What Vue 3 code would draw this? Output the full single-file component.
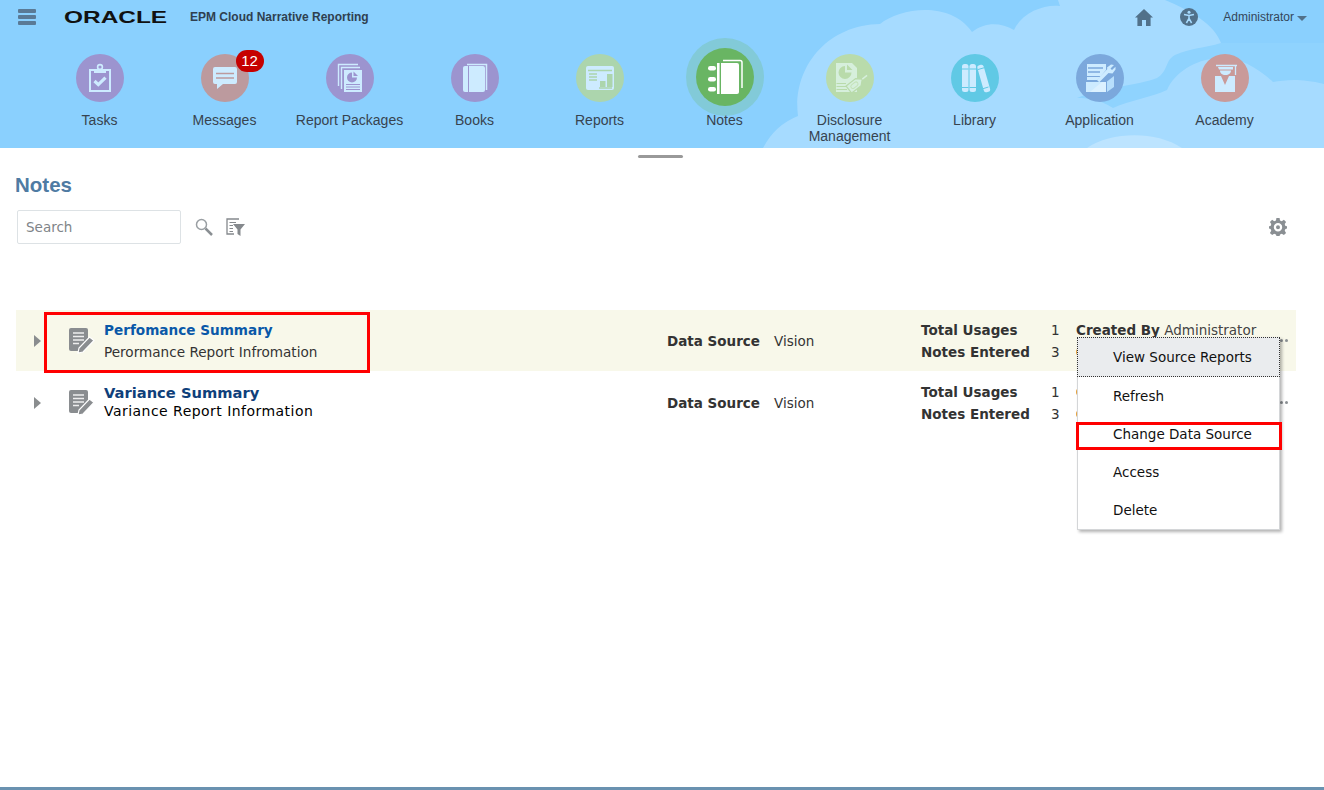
<script setup>
const navItems = [
  { id: 'tasks', label: 'Tasks', color: '#9c94cf' },
  { id: 'messages', label: 'Messages', color: '#bc9a9e', badge: 12 },
  { id: 'packages', label: 'Report Packages', color: '#9c94cf' },
  { id: 'books', label: 'Books', color: '#9c94cf' },
  { id: 'reports', label: 'Reports', color: '#acd5ad' },
  { id: 'notes', label: 'Notes', color: '#69b563', active: true },
  { id: 'disclosure', label: 'Disclosure Management', color: '#b9dbab' },
  { id: 'library', label: 'Library', color: '#60c9e5' },
  { id: 'application', label: 'Application', color: '#7ba8dc' },
  { id: 'academy', label: 'Academy', color: '#c99a99' }
]

const rows = [
  { title: 'Perfomance Summary', sub: 'Perormance Report Infromation', first: true },
  { title: 'Variance Summary', sub: 'Variance Report Information', first: false }
]

const menuItems = ['View Source Reports', 'Refresh', 'Change Data Source', 'Access', 'Delete']
</script>

<template>
  <div class="page">
    <header class="banner">
      <svg class="clouds" width="1324" height="148" viewBox="0 0 1324 148">
        <path fill="#a6dbff" d="M763 148Q775 125 798 116C792 70 825 25 880 24C900 8 950 0 972 32C985 22 1000 22 1014 30C1022 12 1045 4 1060 6L1058 0L1165 0C1190 10 1215 25 1221 43L1324 43L1324 148Z" />
        <path fill="#8fd3fe" d="M1077 98C1100 88 1140 85 1157 78C1168 72 1165 60 1175 55C1190 48 1205 48 1221 43L1324 43L1324 84C1300 78 1285 80 1273 82C1255 65 1235 56 1217 58C1195 60 1175 72 1167 90C1150 98 1130 100 1113 108C1100 100 1090 98 1077 98Z" />
        <path fill="#bde4ff" d="M1087 148C1110 132 1155 130 1182 148Z" />
      </svg>

      <div class="topbar">
        <div class="burger"><i></i><i></i><i></i></div>
        <span class="oracle">ORACLE</span>
        <span class="product">EPM Cloud Narrative Reporting</span>
        <svg class="home" width="18" height="17" viewBox="0 0 18 17">
          <path fill="#51718a" d="M9 0L18 8.5L15.6 8.5L15.6 17L11 17L11 11L7 11L7 17L2.4 17L2.4 8.5L0 8.5Z" />
        </svg>
        <svg class="access" width="18" height="18" viewBox="0 0 18 18">
          <circle cx="9" cy="9" r="9" fill="#51718a" />
          <circle cx="9" cy="4.2" r="1.5" fill="#a6dbff" />
          <path d="M4 6.6L9 7.6L14 6.6M9 7.6L9 10.5M9 10.5L6.4 15M9 10.5L11.6 15" fill="none" stroke="#a6dbff" stroke-width="1.5" />
        </svg>
        <span class="user">Administrator</span>
        <i class="caret"></i>
      </div>

      <nav class="nav">
        <div v-for="item in navItems" :key="item.id" class="nav-item">
          <div class="bubble" :class="{ active: item.active }" :style="{ background: item.color }">
            <svg v-if="item.id === 'tasks'" width="48" height="48" viewBox="0 0 48 48">
              <rect x="14" y="16" width="20" height="21" fill="none" stroke="#cdebff" stroke-width="2" />
              <rect x="18" y="15" width="12" height="4" fill="#cdebff" />
              <circle cx="24" cy="13" r="2.4" fill="none" stroke="#cdebff" stroke-width="1.6" />
              <path d="M18.5 27L22.3 30.6L29.5 23.6" fill="none" stroke="#cdebff" stroke-width="3.2" />
            </svg>
            <svg v-else-if="item.id === 'messages'" width="48" height="48" viewBox="0 0 48 48">
              <path fill="#cdebff" d="M14 13L34 13Q36 13 36 15L36 28Q36 30 34 30L22 30L16 35L16 30L14 30Q12 30 12 28L12 15Q12 13 14 13Z" />
              <path d="M15 19.5L33 19.5M15 24L33 24" stroke="#bc9a9e" stroke-width="1.7" />
            </svg>
            <svg v-else-if="item.id === 'packages'" width="48" height="48" viewBox="0 0 48 48">
              <path d="M32 10.5L12.5 10.5L12.5 32" fill="none" stroke="#cdebff" stroke-width="1.4" />
              <path d="M34 13.5L15.5 13.5L15.5 35" fill="none" stroke="#cdebff" stroke-width="1.4" />
              <rect x="18" y="16" width="18" height="22" fill="#cdebff" />
              <path d="M26 18.5A5 5 0 1 0 31 23.5L26 23.5Z" fill="#9c94cf" />
              <path d="M27.5 17.5L32 22L27.5 22Z" fill="#9c94cf" />
              <path d="M20 30.5L34 30.5M20 33L34 33M20 35.5L34 35.5" stroke="#9c94cf" stroke-width="1" />
            </svg>
            <svg v-else-if="item.id === 'books'" width="48" height="48" viewBox="0 0 48 48">
              <path d="M16 10.5L35.5 10.5L35.5 36" fill="none" stroke="#cdebff" stroke-width="1.5" />
              <rect x="12" y="12" width="22" height="26" rx="2" fill="#cdebff" />
              <path d="M17.5 12L17.5 38" stroke="#9c94cf" stroke-width="1" />
            </svg>
            <svg v-else-if="item.id === 'reports'" width="48" height="48" viewBox="0 0 48 48">
              <rect x="10" y="12" width="28" height="24" rx="2" fill="#cdebff" />
              <path d="M12 16.5L36 16.5M13 20L21 20M13 23L21 23M13 26L21 26M23 34L36 34" stroke="#acd5ad" stroke-width="1.5" />
              <rect x="24" y="27" width="5.5" height="6" fill="#acd5ad" />
              <rect x="31" y="20" width="5.5" height="13" fill="#acd5ad" />
            </svg>
            <svg v-else-if="item.id === 'notes'" width="58" height="58" viewBox="0 0 58 58">
              <path d="M27 12.5L44 12.5Q46 12.5 46 14.5L46 40" fill="none" stroke="#fff" stroke-width="1.5" />
              <path fill="#fff" d="M25 15L41 15Q43 15 43 17L43 44Q43 46 41 46L25 46Z" />
              <rect x="21" y="15" width="2.6" height="31" fill="#fff" />
              <rect x="12" y="18" width="8" height="4.4" rx="2.2" fill="#fff" />
              <rect x="12" y="29" width="8" height="4.4" rx="2.2" fill="#fff" />
              <rect x="12" y="39" width="8" height="4.4" rx="2.2" fill="#fff" />
            </svg>
            <svg v-else-if="item.id === 'disclosure'" width="48" height="48" viewBox="0 0 48 48">
              <path fill="#d6efdc" d="M10 9L26 9L31 14L31 38L10 38Z" />
              <path d="M19 12A6.5 6.5 0 1 0 25.5 18.5L19 18.5Z" fill="#b9dbab" />
              <path d="M21 10.5L26.5 16L21 16Z" fill="#b9dbab" />
              <path d="M10.5 29.5L20 29.5M10.5 32.5L20 32.5M10.5 35.5L21 35.5" stroke="#b9dbab" stroke-width="1" />
              <g transform="rotate(-38 30 30)">
                <path fill="#d6efdc" stroke="#b9dbab" stroke-width="1.2" d="M21 25.5L33 25.5L38 30L33 34.5L21 34.5Z" />
                <rect x="24" y="28" width="8" height="4" rx="2" fill="none" stroke="#c4e2b8" stroke-width="1" />
                <path d="M38 30L44 30" stroke="#d6efdc" stroke-width="1.5" />
              </g>
            </svg>
            <svg v-else-if="item.id === 'library'" width="48" height="48" viewBox="0 0 48 48">
              <rect x="11" y="10" width="6.5" height="28" rx="2.5" fill="#cdebff" />
              <rect x="18.5" y="10" width="6.5" height="28" rx="2.5" fill="#cdebff" />
              <rect x="29.5" y="10.5" width="6.5" height="28" rx="2.5" fill="#cdebff" transform="rotate(-16 32.7 24.5)" />
              <path d="M11 15L17.5 15M18.5 15L25 15M11 33.5L17.5 33.5M18.5 33.5L25 33.5M27 15.5L33 13.8M31.5 34.8L37.5 33" stroke="#60c9e5" stroke-width="1" />
            </svg>
            <svg v-else-if="item.id === 'application'" width="48" height="48" viewBox="0 0 48 48">
              <path fill="#cdebff" d="M11 10L30 10L30 16L25 22L11 22Z" />
              <path d="M12 14L27 14M12 18L24 18" stroke="#7ba8dc" stroke-width="1.5" />
              <path fill="#cdebff" d="M11 23L24 23L21 26L11 26Z" />
              <path d="M22 27L33 16" stroke="#cdebff" stroke-width="3.5" />
              <path fill="#cdebff" d="M31 13.5L35 10.5L38 11L34.5 14.5L36 16L39.5 12.8L39.5 15.5L36.5 19.5L32 19Z" />
              <path fill="#cdebff" d="M10 28L30 28L30 38L10 38Z" />
              <path fill="#dcf1ff" d="M14 38L26 28L30 28L30 38Z" />
              <path fill="#b8dffc" d="M31 27.5L38 22L38 33L31 38Z" />
            </svg>
            <svg v-else width="48" height="48" viewBox="0 0 48 48">
              <path d="M15 11.5L36 11.5M34.5 11.5L34.5 21" stroke="#cdebff" stroke-width="1.3" fill="none" />
              <path fill="#cdebff" d="M17 13L32 13L32 15.5L18 15.5ZM19 16.5L30 16.5C30 19 28 21 24.5 21C21 21 19 19 19 16.5Z" />
              <path fill="#cdebff" d="M14 22L20 22L24 31L28 22L34 22L34 38L14 38Z" />
            </svg>
            <span v-if="item.badge" class="badge">{{ item.badge }}</span>
          </div>
          <span class="nav-label">{{ item.label }}</span>
        </div>
      </nav>
    </header>

    <div class="grabber-bar"><i class="grabber"></i></div>

    <main class="content">
      <h1 class="heading">Notes</h1>
      <div class="toolbar">
        <input class="search" placeholder="Search" />
        <svg width="18" height="18" viewBox="0 0 18 18">
          <circle cx="6.5" cy="6.5" r="5" fill="none" stroke="#9a9fa3" stroke-width="1.5" />
          <path d="M10.5 10.5L17 17" stroke="#8a8f93" stroke-width="2.5" />
        </svg>
        <svg class="filter" width="19" height="18" viewBox="0 0 19 18">
          <path d="M13 1L1 1L1 16L8 16" fill="none" stroke="#85898d" stroke-width="1.3" />
          <path d="M3.5 4.5L10 4.5M3.5 7.5L7 7.5M3.5 10.5L7 10.5M3.5 13.5L7 13.5" stroke="#85898d" stroke-width="1.2" />
          <path fill="#85898d" d="M7 6L19 6L14.5 11.5L14.5 18L11.5 16L11.5 11.5Z" />
        </svg>
        <svg class="gear" width="18" height="18" viewBox="0 0 18 18">
          <path fill="#8a8f93" fill-rule="evenodd" d="M7.4 0L10.6 0L11 2.5L12.8 3.3L14.9 1.8L17.1 4L15.7 6.1L16.4 7.9L18 8.2L18 10.6L16.4 11L15.7 12.8L17.1 14.9L14.9 17.1L12.8 15.7L11 16.4L10.6 18L7.4 18L7 16.4L5.2 15.7L3.1 17.1L0.9 14.9L2.3 12.8L1.6 11L0 10.6L0 8.2L1.6 7.9L2.3 6.1L0.9 4L3.1 1.8L5.2 3.3L7 2.5ZM9 5A4.2 4.2 0 1 0 9 13.4A4.2 4.2 0 1 0 9 5ZM9 7.2A2 2 0 1 1 9 11.2A2 2 0 1 1 9 7.2Z" />
        </svg>
      </div>

      <div class="rows">
        <div v-for="row in rows" :key="row.title" class="row" :class="{ first: row.first }">
          <i class="arrow"></i>
          <svg class="note-icon" width="27" height="26" viewBox="0 0 27 26">
            <path fill="#8a8d90" d="M2 0L17 0Q19 0 19 2L19 12L9 23L2 23Q0 23 0 21L0 2Q0 0 2 0Z" />
            <path d="M4 5L15 5M4 8.5L15 8.5M4 12L15 12M4 15.5L10 15.5" stroke="#fff" stroke-opacity=".85" stroke-width="1.5" />
            <path fill="#8a8d90" stroke="#fff" stroke-width="1.2" d="M20.5 9L25 12.5L14 24L9 25L10 20Z" />
          </svg>
          <div class="title-cell">
            <a class="title">{{ row.title }}</a>
            <span class="sub">{{ row.sub }}</span>
            <i v-if="row.first" class="mark title-mark"></i>
          </div>
          <span class="label ds-label">Data Source</span>
          <span class="ds-value">Vision</span>
          <div class="stats">
            <span class="label">Total Usages</span>
            <span class="num">1</span>
            <span v-if="row.first" class="created"><b class="label">Created By</b> Administrator</span>
            <i v-else class="warn"></i>
            <span class="label">Notes Entered</span>
            <span class="num">3</span>
            <i class="warn"></i>
          </div>
          <div class="more"><i></i><i></i></div>
        </div>

        <ul class="menu">
          <li v-for="(m, i) in menuItems" :key="m" :class="{ focused: i === 0, marked: i === 2 }">{{ m }}</li>
        </ul>
      </div>
    </main>
  </div>
</template>

<style>
html, body { margin: 0; background: #fff; }
</style>

<style scoped>
.page {
  width: 1324px;
  height: 790px;
  box-sizing: border-box;
  border-bottom: 3px solid #6a92b0;
  overflow: hidden;
  font-family: "Liberation Sans", Arial, sans-serif;
}

.banner {
  position: relative;
  height: 148px;
  background: #8ad0fe;
  overflow: hidden;
}
.clouds { position: absolute; left: 0; top: 0; }

.topbar {
  position: relative;
  display: flex;
  align-items: center;
  height: 34px;
  padding-left: 18px;
  color: #2f4050;
}
.burger { display: flex; flex-direction: column; gap: 2.5px; width: 18px; }
.burger i { display: block; height: 3.5px; background: #5a7a96; border-radius: 1px; }
.oracle {
  display: inline-block;
  width: 103px;
  margin-left: 28px;
  font-size: 16.5px;
  font-weight: bold;
  color: #111;
  transform: scaleX(1.48);
  transform-origin: left center;
}
.product { margin-left: 23px; font-size: 12px; font-weight: bold; color: #2f4050; }
.home { margin-left: auto; }
.access { margin-left: 27px; }
.user { margin-left: 25px; font-size: 12px; color: #34465a; }
.caret {
  margin: 2px 17px 0 3px;
  width: 0; height: 0;
  border-left: 5px solid transparent;
  border-right: 5px solid transparent;
  border-top: 5px solid #51718a;
}

.nav {
  position: relative;
  display: flex;
  padding: 20px 0 0 37px;
}
.nav-item {
  width: 125px;
  display: flex;
  flex-direction: column;
  align-items: center;
}
.bubble {
  position: relative;
  width: 48px;
  height: 48px;
  border-radius: 50%;
  flex: none;
}
.bubble svg { display: block; }
.bubble.active {
  width: 58px;
  height: 58px;
  margin: -6px 0 -4px;
  box-shadow: 0 0 0 10px #82cad8;
}
.badge {
  position: absolute;
  left: 35px;
  top: -4px;
  width: 28px;
  height: 22px;
  border-radius: 11px;
  background: #c60000;
  color: #fff;
  font-size: 15px;
  line-height: 22px;
  text-align: center;
}
.nav-label {
  position: relative;
  margin-top: 10px;
  width: 120px;
  font-size: 14px;
  line-height: 16px;
  text-align: center;
  color: #37434f;
}

.grabber-bar { display: flex; justify-content: flex-start; height: 0; padding-left: 638px; }
.grabber { display: block; width: 45px; height: 3px; margin-top: 7px; background: #999; border-radius: 2px; flex: none; }

.content { padding: 25px 28px 0 16px; font-family: "DejaVu Sans", Tahoma, sans-serif; }
.heading {
  margin: 0 0 0 -1px;
  font-family: "Liberation Sans", Arial, sans-serif;
  font-size: 20.5px;
  line-height: 24px;
  font-weight: bold;
  color: #4f7ba3;
}
.toolbar {
  display: flex;
  align-items: center;
  margin-top: 13px;
  padding-left: 1px;
  padding-right: 9px;
}
.search {
  width: 164px;
  height: 34px;
  box-sizing: border-box;
  border: 1px solid #dde2e5;
  border-radius: 2px;
  padding: 0 8px;
  margin-right: 14px;
  font-family: "DejaVu Sans", Tahoma, sans-serif;
  font-size: 13.5px;
  outline: none;
}
.search::placeholder { color: #808488; opacity: 1; }
.filter { margin-left: 13px; }
.gear { margin-left: auto; }

.rows { position: relative; margin-top: 66px; width: 1280px; }
.row {
  position: relative;
  display: flex;
  align-items: center;
  height: 62px;
  font-size: 13.5px;
  color: #222;
}
.row.first { height: 61px; margin-bottom: 1px; background: #f8f8ea; }
.arrow {
  margin-left: 18px;
  width: 0; height: 0;
  border-top: 6px solid transparent;
  border-bottom: 6px solid transparent;
  border-left: 7px solid #8a8d8f;
  flex: none;
}
.note-icon { margin-left: 28px; flex: none; }
.title-cell {
  position: relative;
  width: 563px;
  margin-left: 8px;
  margin-bottom: 2px;
  display: flex;
  flex-direction: column;
  flex: none;
}
.title { font-size: 14.7px; line-height: 18px; font-weight: bold; color: #0f3f7a; }
.sub { font-size: 14px; line-height: 18px; color: #000; letter-spacing: .46px; }
.first .title-cell { margin-bottom: 0; }
.first .title { font-size: 13.6px; color: #0a58a8; }
.first .sub { margin-top: 4px; font-size: 13.6px; color: #333; letter-spacing: 0; }
/* red annotation round the first row's title */
.title-mark {
  position: absolute;
  left: -60px;
  top: -9px;
  width: 320px;
  height: 55px;
  border: 3px solid #f00;
}
.label { font-weight: bold; color: #333; }
.ds-label { width: 107px; flex: none; }
.ds-value { width: 147px; flex: none; color: #333; }
.stats {
  display: grid;
  grid-template-columns: 130px 25px 200px;
  grid-auto-rows: 22px;
  align-items: center;
  flex: none;
}
.num { color: #333; }
.created { white-space: nowrap; color: #444; }
.warn {
  display: block;
  width: 8px;
  height: 8px;
  border-radius: 50%;
  background: #e8a33d;
}
.more {
  position: absolute;
  right: 8px;
  top: 50%;
  margin-top: -2px;
  display: flex;
  gap: 2px;
}
.more i { display: block; width: 3px; height: 3px; border-radius: 50%; background: #8a8f93; }

.menu {
  position: absolute;
  left: 1061px;
  top: 27px;
  width: 203px;
  box-sizing: border-box;
  margin: 0;
  padding: 0;
  list-style: none;
  background: #fff;
  border: 1px solid #d4d6d8;
  border-top: none;
  box-shadow: 2px 2px 3px rgba(0, 0, 0, .3);
  font-size: 13.5px;
  color: #111;
}
.menu li {
  position: relative;
  height: 38px;
  line-height: 38px;
  padding-left: 35px;
  white-space: nowrap;
}
.menu li.focused {
  height: 40px;
  line-height: 38px;
  margin: 0 -1px;
  box-sizing: border-box;
  background: #eaecee;
  border: 1px dotted #333;
}
.menu li.marked::after {
  content: "";
  position: absolute;
  left: -2px;
  right: -3px;
  top: 7px;
  height: 22px;
  border: 3px solid #f00;
}
</style>
